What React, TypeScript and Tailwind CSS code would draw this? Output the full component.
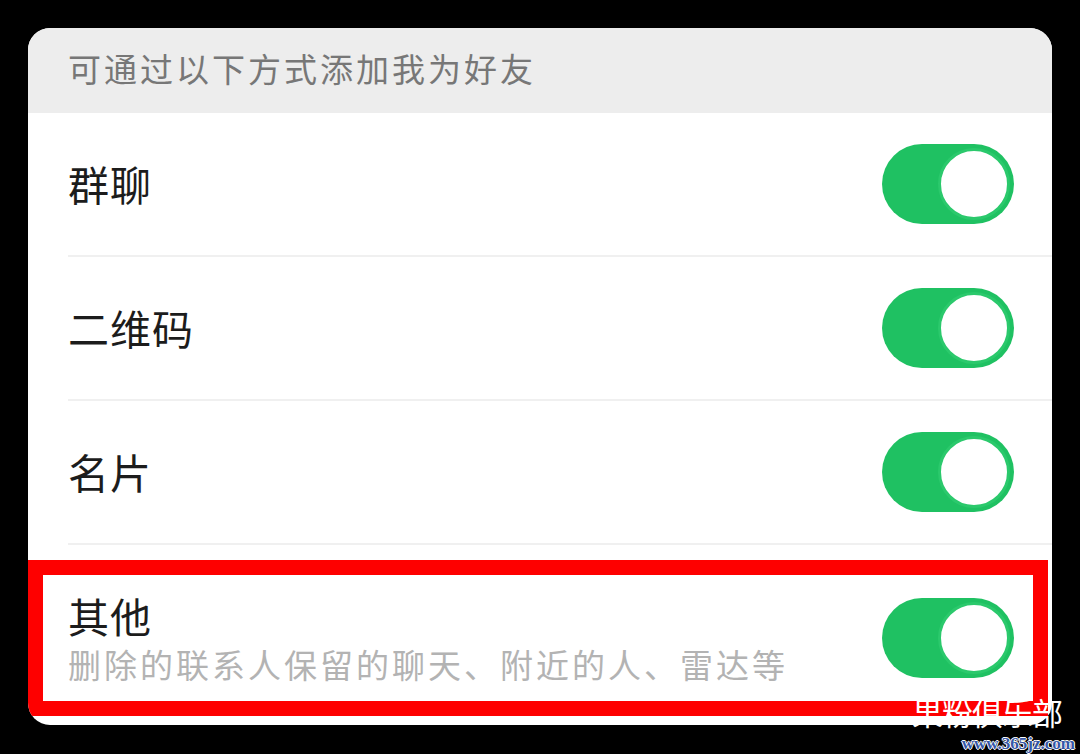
import React from "react";

const font = { fontFamily: '"Noto Sans CJK SC", "Noto Sans", sans-serif' };

function Toggle() {
  return (
    <div className="w-[132px] h-[80px] rounded-full bg-[#1fc162] p-[4px] flex justify-end items-center shrink-0">
      <div className="w-[72px] h-[72px] rounded-full bg-white border-[3px] border-[#2bc96c]" />
    </div>
  );
}

function Row({ label }: { label: string }) {
  return (
    <div className="ml-[40px] h-[144px] border-b-[2px] border-[#f0f0f0] flex items-center justify-between pr-[38px]">
      <span className="text-[41px] text-[#1c1c1c] tracking-[1px]">{label}</span>
      <Toggle />
    </div>
  );
}

export default function App() {
  return (
    <div className="w-[1080px] h-[754px] bg-black relative overflow-hidden pt-[28px] pl-[28px]" style={font}>
      <div className="w-[1024px] h-[697px] bg-white rounded-[22px] overflow-hidden flex flex-col">
        <div className="h-[85px] bg-[#ededed] pl-[40px] pb-[4px] flex items-center text-[33px] text-[#777777] tracking-[3px]">
          可通过以下方式添加我为好友
        </div>
        <Row label="群聊" />
        <Row label="二维码" />
        <Row label="名片" />
        <div className="h-[15px]" />
        <div className="w-[1020px] h-[156px] border-[15px] border-[#fe0000] flex items-center justify-between pl-[25px] pr-[19px]">
          <div className="flex flex-col">
            <span className="text-[41px] leading-[52px] text-[#1c1c1c] tracking-[1px]">其他</span>
            <span className="text-[33px] leading-[46px] text-[#b3b3b3] tracking-[3px]">删除的联系人保留的聊天、附近的人、雷达等</span>
          </div>
          <Toggle />
        </div>
      </div>
      <div className="absolute right-[5px] bottom-0 flex flex-col items-end">
        <div className="text-white text-[31px] leading-[45px] tracking-[-1px] mr-[13px]">果粉俱乐部</div>
        <div
          className="text-[17px] leading-[20px] font-bold text-[#3557a8] [text-shadow:1px_0_0_#fff,-1px_0_0_#fff,0_1px_0_#fff,0_-1px_0_#fff]"
          style={{ fontFamily: '"Liberation Serif", serif' }}
        >
          www.365jz.com
        </div>
      </div>
    </div>
  );
}
